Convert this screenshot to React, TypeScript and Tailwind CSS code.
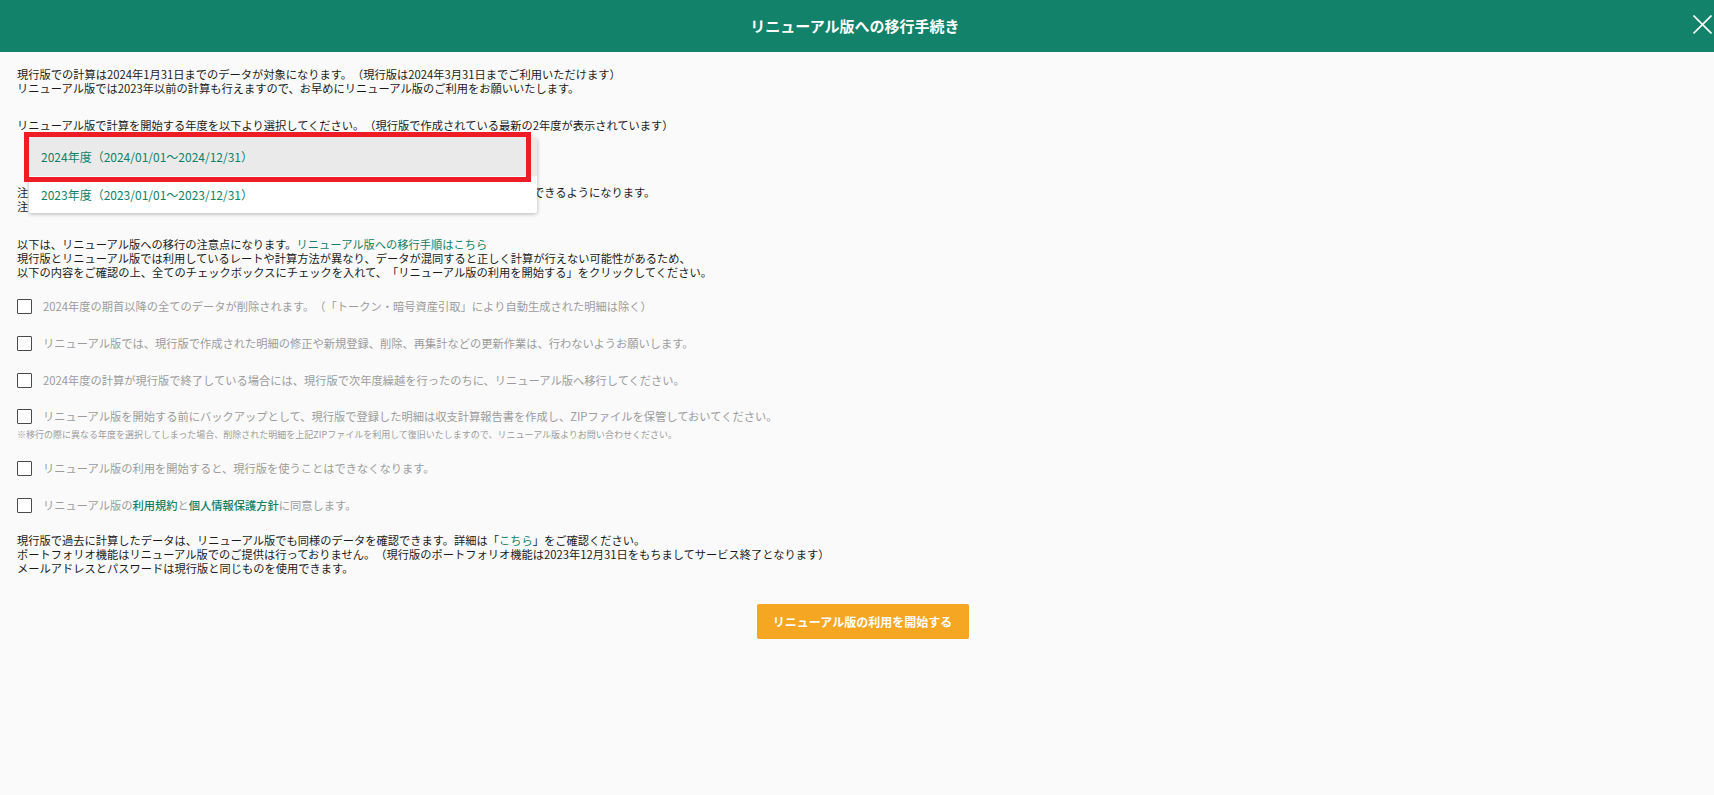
const font = "[font-family:'Noto_Sans_CJK_JP','Noto_Sans_CJK_SC',sans-serif]";

const green = "text-[#108168]";

function CheckRow({ children, className = "" }: { children: React.ReactNode; className?: string }) {
  return (
    <div className={`flex items-center h-[18px] ${className}`}>
      <span className="w-[15px] h-[15px] shrink-0 bg-white border border-[#4a4a4a] rounded-[1px]" />
      <span className="ml-[11px] text-[#9c9c9c]">{children}</span>
    </div>
  );
}

export default function App() {
  return (
    <div className={`relative min-h-[795px] bg-[#fafafa] text-[11.25px] leading-[14px] text-[#1a1a1a] [text-spacing-trim:space-all] ${font}`}>
      <header className="relative h-[52px] flex items-center justify-center pr-[4px] bg-[#12826a]">
        <h1 className="text-[15px] font-bold text-white">リニューアル版への移行手続き</h1>
        <button className="absolute right-[2px] top-[15px] text-white">
          <svg width="19" height="19" viewBox="0 0 19 19" fill="none" stroke="currentColor" strokeWidth="1.6">
            <path d="M0.5 0.5 L18.5 18.5 M18.5 0.5 L0.5 18.5" />
          </svg>
        </button>
      </header>

      <main className="pl-[17px] pr-4 pt-[15px]">
        <p>現行版での計算は2024年1月31日までのデータが対象になります。（現行版は2024年3月31日までご利用いただけます）</p>
        <p>リニューアル版では2023年以前の計算も行えますので、お早めにリニューアル版のご利用をお願いいたします。</p>

        <p className="mt-[23px]">リニューアル版で計算を開始する年度を以下より選択してください。（現行版で作成されている最新の2年度が表示されています）</p>

        <div className="relative mt-[5px]">
          <div className="h-[48px]" />
          <p>注：選択した年度のデータのみが移行の対象となり、選択した年度より前の計算は、リニューアル版でできるようになります。</p>
          <p>注：移行後に年度を変更することはできません。</p>

          <div className="absolute left-[12px] top-[1px] w-[508px] text-[12px] bg-white rounded-[2px] shadow-[0_1px_4px_rgba(0,0,0,0.28)]">
            <div className={`h-[38px] flex items-center pl-[12px] bg-[#eaeaea] ${green}`}>2024年度（2024/01/01～2024/12/31）</div>
            <div className={`h-[37px] flex items-center pl-[12px] ${green}`}>2023年度（2023/01/01～2023/12/31）</div>
          </div>
          <div className="absolute left-[7px] -top-[5px] w-[507px] h-[50px] border-[5px] border-[#ee1c25]" />
        </div>

        <p className="mt-[24px]">
          以下は、リニューアル版への移行の注意点になります。<a className={green}>リニューアル版への移行手順はこちら</a>
        </p>
        <p>現行版とリニューアル版では利用しているレートや計算方法が異なり、データが混同すると正しく計算が行えない可能性があるため、</p>
        <p>以下の内容をご確認の上、全てのチェックボックスにチェックを入れて、「リニューアル版の利用を開始する」をクリックしてください。</p>

        <CheckRow className="mt-[18px]">2024年度の期首以降の全てのデータが削除されます。（「トークン・暗号資産引取」により自動生成された明細は除く）</CheckRow>
        <CheckRow className="mt-[19px]">リニューアル版では、現行版で作成された明細の修正や新規登録、削除、再集計などの更新作業は、行わないようお願いします。</CheckRow>
        <CheckRow className="mt-[19px]">2024年度の計算が現行版で終了している場合には、現行版で次年度繰越を行ったのちに、リニューアル版へ移行してください。</CheckRow>
        <CheckRow className="mt-[18px]">リニューアル版を開始する前にバックアップとして、現行版で登録した明細は収支計算報告書を作成し、ZIPファイルを保管しておいてください。</CheckRow>
        <p className="mt-[4px] text-[9px] leading-[12px] text-[#9c9c9c]">※移行の際に異なる年度を選択してしまった場合、削除された明細を上記ZIPファイルを利用して復旧いたしますので、リニューアル版よりお問い合わせください。</p>
        <CheckRow className="mt-[18px]">リニューアル版の利用を開始すると、現行版を使うことはできなくなります。</CheckRow>
        <CheckRow className="mt-[19px]">
          リニューアル版の<a className={`font-medium ${green}`}>利用規約</a>と<a className={`font-medium ${green}`}>個人情報保護方針</a>に同意します。
        </CheckRow>

        <p className="mt-[19px]">
          現行版で過去に計算したデータは、リニューアル版でも同様のデータを確認できます。詳細は「<a className={green}>こちら</a>」をご確認ください。
        </p>
        <p>ポートフォリオ機能はリニューアル版でのご提供は行っておりません。（現行版のポートフォリオ機能は2023年12月31日をもちましてサービス終了となります）</p>
        <p>メールアドレスとパスワードは現行版と同じものを使用できます。</p>

        <div className="mt-[29px] pl-[10px] flex justify-center">
          <button className="w-[212px] h-[35px] rounded-[2px] bg-[#f5a623] text-[12px] text-white font-bold">リニューアル版の利用を開始する</button>
        </div>
      </main>
    </div>
  );
}
